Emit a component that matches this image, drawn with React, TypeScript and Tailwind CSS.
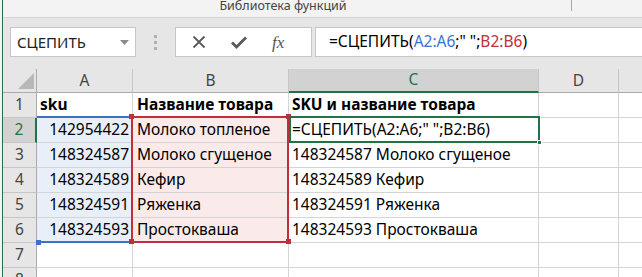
// Excel-like sheet: formula bar with СЦЕПИТЬ and a small table

const font = { fontFamily: '"Noto Sans", "Liberation Sans", sans-serif' }

type Row = { n: number; a: string; b: string; c: string; bold?: boolean }

const rows: Row[] = [
  { n: 1, a: 'sku', b: 'Название товара', c: 'SKU и название товара', bold: true },
  { n: 2, a: '142954422', b: 'Молоко топленое', c: '=СЦЕПИТЬ(A2:A6;" ";B2:B6)' },
  { n: 3, a: '148324587', b: 'Молоко сгущеное', c: '148324587 Молоко сгущеное' },
  { n: 4, a: '148324589', b: 'Кефир', c: '148324589 Кефир' },
  { n: 5, a: '148324591', b: 'Ряженка', c: '148324591 Ряженка' },
  { n: 6, a: '148324593', b: 'Простокваша', c: '148324593 Простокваша' },
  { n: 7, a: '', b: '', c: '' },
  { n: 8, a: '', b: '', c: '' },
]

function Square({ className }: { className: string }) {
  return <div className={'absolute w-[5px] h-[5px] ' + className} />
}

export default function App() {
  return (
    <div className="w-[642px] h-[277px] overflow-hidden flex flex-row bg-[#f3f3f3] text-black" style={font}>
      <div className="w-[2px] shrink-0" />
      <div className="w-[1px] shrink-0 bg-[#217346]" />

      <div className="flex-1 flex flex-col">
        {/* ribbon group label */}
        <div className="h-[18px] shrink-0 border-b border-[#d5d5d5] flex flex-row">
          <div className="w-[568px] flex justify-center">
            <span className="text-[12.5px] leading-[12px] text-[#444] ml-[-8px]">Библиотека функций</span>
          </div>
          <div className="w-[1px] h-[11px] bg-[#a8a8a8]" />
        </div>

        {/* formula bar */}
        <div className="h-[51px] shrink-0 bg-[#e6e6e6] flex flex-row items-start pt-[9px]">
          <div className="ml-[7px] w-[126px] h-[30px] bg-white border border-[#c6c6c6] flex flex-row items-center pl-[6px] pr-[6px]">
            <span className="flex-1 text-[15px] text-[#222]">СЦЕПИТЬ</span>
            <svg width="9" height="5" viewBox="0 0 9 5">
              <path d="M0 0 L9 0 L4.5 5 Z" fill="#8a8a8a" />
            </svg>
          </div>
          <div className="w-[39px] h-[30px] flex flex-col items-center justify-center gap-[3px]">
            <div className="w-[3px] h-[3px] bg-[#b0b0b0]" />
            <div className="w-[3px] h-[3px] bg-[#b0b0b0]" />
            <div className="w-[3px] h-[3px] bg-[#b0b0b0]" />
          </div>
          <div className="w-[137px] h-[30px] bg-white border border-[#c6c6c6] flex flex-row items-center">
            <svg width="14" height="14" viewBox="0 0 14 14" className="ml-[16px]">
              <path d="M1.5 1.5 L12.5 12.5 M12.5 1.5 L1.5 12.5" stroke="#5a5a5a" strokeWidth="1.8" />
            </svg>
            <svg width="16" height="13" viewBox="0 0 16 13" className="ml-[25px]">
              <path d="M1 6.5 L5.5 11 L15 1.5" stroke="#5a5a5a" strokeWidth="2.8" fill="none" />
            </svg>
            <span
              className="ml-[25px] text-[17px] italic text-[#555] leading-none"
              style={{ fontFamily: '"Liberation Serif", serif' }}
            >
              fx
            </span>
          </div>
          <div className="ml-[3px] flex-1 h-[30px] bg-white border border-[#c6c6c6] border-r-0 flex items-center pl-[13px]">
            <span className="text-[15.5px]">
              =СЦЕПИТЬ(<span className="text-[#3a72c8]">A2:A6</span>;" ";<span className="text-[#c0303a]">B2:B6</span>)
            </span>
          </div>
        </div>

        {/* sheet */}
        <div className="relative flex-1 bg-white">
          {/* column headers */}
          <div className="h-[24px] flex flex-row bg-[#e6e6e6] text-[15.5px] text-[#444]">
            <div className="w-[34px] shrink-0 border-r border-b border-[#ababab] flex items-end justify-end pr-[2px] pb-[3px]">
              <svg width="16" height="16" viewBox="0 0 16 16">
                <path d="M16 0 L16 16 L0 16 Z" fill="#b8b8b8" />
              </svg>
            </div>
            <div className="w-[96px] shrink-0 border-r border-b border-[#ababab] border-r-[#c6c6c6] flex items-center justify-center">A</div>
            <div className="w-[156px] shrink-0 border-r border-b border-[#ababab] border-r-[#c6c6c6] flex items-center justify-center">B</div>
            <div className="w-[250px] shrink-0 border-r border-r-[#c6c6c6] border-b-2 border-b-[#217346] bg-[#d2d2d2] text-[#217346] flex items-center justify-center">C</div>
            <div className="w-[80px] shrink-0 border-r border-b border-[#ababab] border-r-[#c6c6c6] flex items-center justify-center">D</div>
            <div className="flex-1 border-b border-[#ababab]" />
          </div>

          {rows.map((r) => (
            <div key={r.n} className={'h-[25px] flex flex-row text-[15.5px] ' + (r.bold ? 'font-bold' : '')}>
              <div
                className={
                  'w-[34px] shrink-0 border-b border-[#c6c6c6] flex items-center justify-center font-normal ' +
                  (r.n === 2
                    ? 'bg-[#d2d2d2] text-[#217346] border-r-2 border-r-[#217346]'
                    : 'bg-[#e6e6e6] text-[#444] border-r border-r-[#ababab]')
                }
              >
                {r.n}
              </div>
              <div
                className={
                  'w-[96px] shrink-0 border-r border-b border-[#d4d4d4] flex items-end pb-[1px] whitespace-nowrap overflow-hidden ' +
                  (r.bold ? 'pl-[3px] ' : 'justify-end pr-[3px] ') +
                  (r.n >= 2 && r.n <= 6 ? 'bg-[#e8eff9]' : '')
                }
              >
                {r.a}
              </div>
              <div
                className={
                  'w-[156px] shrink-0 border-r border-b border-[#d4d4d4] flex items-end pl-[4px] pb-[1px] whitespace-nowrap overflow-hidden ' +
                  (r.n >= 2 && r.n <= 6 ? 'bg-[#fbeaea]' : '')
                }
              >
                {r.b}
              </div>
              <div className="w-[250px] shrink-0 border-r border-b border-[#d4d4d4] flex items-end pl-[3px] pb-[1px] whitespace-nowrap">
                {r.c}
              </div>
              <div className="w-[80px] shrink-0 border-r border-b border-[#d4d4d4]" />
              <div className="flex-1 border-b border-[#d4d4d4]" />
            </div>
          ))}

          {/* range A2:A6 (blue) */}
          <div className="absolute left-[34px] top-[47px] w-[94px] h-[2px] bg-[#3a72c8]" />
          <div className="absolute left-[34px] top-[172px] w-[94px] h-[2px] bg-[#3a72c8]" />
          <Square className="left-[33px] top-[171px] bg-[#3a72c8]" />

          {/* range B2:B6 (red) */}
          <div className="absolute left-[128px] top-[47px] w-[158px] h-[127px] border-2 border-[#c0303a]" />
          <Square className="left-[126px] top-[45px] bg-[#c0303a]" />
          <Square className="left-[283px] top-[45px] bg-[#c0303a]" />
          <Square className="left-[126px] top-[170px] bg-[#c0303a]" />
          <Square className="left-[283px] top-[170px] bg-[#c0303a]" />

          {/* active cell C2 */}
          <div className="absolute left-[286px] top-[47px] w-[251px] h-[27px] border-2 border-[#217346]" />
          <Square className="left-[534px] top-[71px] bg-[#217346] border border-white" />
        </div>
      </div>
    </div>
  )
}
